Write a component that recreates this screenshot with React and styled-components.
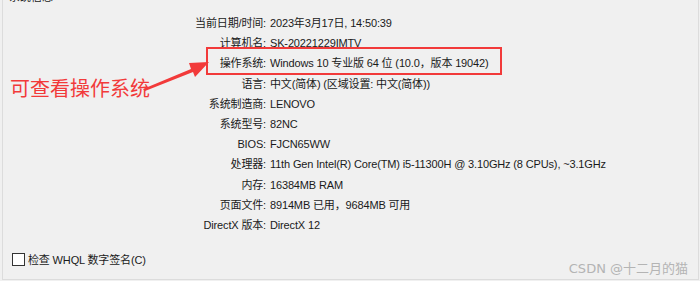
import styled, { createGlobalStyle } from "styled-components";

const GlobalStyle = createGlobalStyle`
  html, body {
    margin: 0;
    padding: 0;
    background: #f0f0f0;
    overflow: hidden;
  }
  body {
    font-family: "Liberation Sans", "Noto Sans CJK SC", sans-serif;
  }
`;

const Frame = styled.div`
  width: 700px;
  height: 281px;
  box-sizing: border-box;
  padding: 0 1px 1px 2px;
  background: #f0f0f0;
`;

const GroupBox = styled.div`
  position: relative;
  height: 100%;
  box-sizing: border-box;
  border-left: 1px solid #dcdcdc;
  border-right: 1px solid #dcdcdc;
  border-bottom: 1px solid #dcdcdc;
  display: flex;
  flex-direction: column;
  overflow: hidden;
`;

const Legend = styled.div`
  margin: -11px 0 0 6px;
  font-size: 11px;
  line-height: 16px;
  color: #222;
  height: 16px;
`;

const InfoGrid = styled.div`
  display: grid;
  grid-template-columns: 263px 1fr;
  column-gap: 4px;
  grid-auto-rows: 20.2px;
  margin-top: 8px;
  font-size: 11px;
  letter-spacing: -0.15px;
  color: #1a1a1a;
`;

const Label = styled.div`
  text-align: right;
  line-height: 21px;
  white-space: nowrap;
`;

const Value = styled.div`
  line-height: 21px;
  white-space: nowrap;
`;

const Footer = styled.label`
  margin-top: auto;
  margin-bottom: 12px;
  margin-left: 9px;
  display: flex;
  align-items: center;
  gap: 3px;
  font-size: 11px;
  letter-spacing: -0.15px;
  color: #1a1a1a;
`;

const CheckBox = styled.span`
  width: 11px;
  height: 11px;
  border: 1px solid #333;
  background: #fff;
  display: inline-block;
`;

const Highlight = styled.div`
  position: absolute;
  left: 203px;
  top: 47px;
  width: 292px;
  height: 24px;
  border: 2.5px solid #f23a3a;
`;

const Annotation = styled.div`
  position: absolute;
  left: 7px;
  top: 76px;
  font-size: 20px;
  line-height: 24px;
  color: #f23a3a;
  font-family: "Noto Sans CJK SC", sans-serif;
`;

const Arrow = styled.svg`
  position: absolute;
  left: 136px;
  top: 52px;
`;

const Watermark = styled.div`
  position: absolute;
  right: 10px;
  bottom: 2px;
  font-size: 13px;
  color: #b4b4b4;
  font-family: "DejaVu Sans", "Noto Sans CJK SC", sans-serif;
`;

const rows = [
  ["当前日期/时间:", "2023年3月17日, 14:50:39"],
  ["计算机名:", "SK-20221229IMTV"],
  ["操作系统:", "Windows 10 专业版 64 位 (10.0，版本 19042)"],
  ["语言:", "中文(简体) (区域设置: 中文(简体))"],
  ["系统制造商:", "LENOVO"],
  ["系统型号:", "82NC"],
  ["BIOS:", "FJCN65WW"],
  ["处理器:", "11th Gen Intel(R) Core(TM) i5-11300H @ 3.10GHz (8 CPUs), ~3.1GHz"],
  ["内存:", "16384MB RAM"],
  ["页面文件:", "8914MB 已用，9684MB 可用"],
  ["DirectX 版本:", "DirectX 12"],
];

export default function App() {
  return (
    <>
      <GlobalStyle />
      <Frame>
        <GroupBox>
          <Legend>系统信息</Legend>
          <InfoGrid>
            {rows.map(([label, value]) => (
              <>
                <Label key={label}>{label}</Label>
                <Value key={label + "v"}>{value}</Value>
              </>
            ))}
          </InfoGrid>
          <Footer>
            <CheckBox />
            检查 WHQL 数字签名(C)
          </Footer>
          <Highlight />
          <Annotation>可查看操作系统</Annotation>
          <Arrow width="72" height="40" viewBox="0 0 72 40">
            <path d="M4 37 L52 17 L50 11 L70 10 L56 25 L54 20 L6 39 Z" fill="#f23a3a" />
          </Arrow>
          <Watermark>CSDN @十二月的猫</Watermark>
        </GroupBox>
      </Frame>
    </>
  );
}
